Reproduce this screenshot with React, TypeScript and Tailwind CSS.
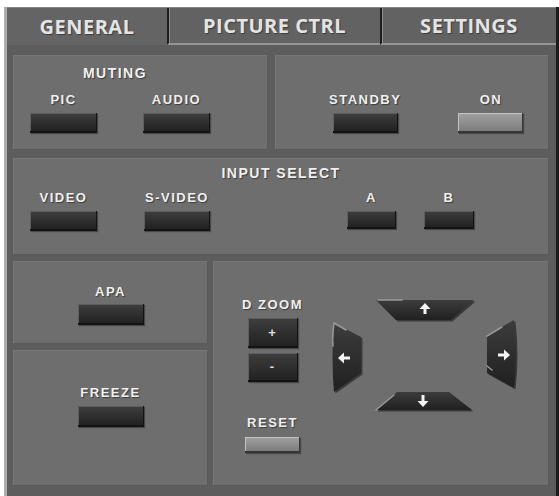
import React from 'react'

const lbl =
  "font-['Liberation_Sans',Arial,sans-serif] font-bold text-[#f0f0f0] leading-none tracking-[1.5px] [text-shadow:1px_1px_1px_rgba(0,0,0,0.45)] whitespace-nowrap"
const tabTxt =
  "font-['Open_Sans',sans-serif] font-bold text-[20px] leading-none tracking-[0.5px] text-[#e4e4e4] [text-shadow:1px_1px_1px_rgba(0,0,0,0.4)]"
const panel =
  'bg-[#6e6e6e] shadow-[inset_-1px_-1px_0_rgba(0,0,0,0.18),inset_1px_1px_0_rgba(255,255,255,0.06)]'
const dark =
  'bg-linear-to-b from-[#3e3e3e] to-[#222222] border-b-2 border-r border-[#131313] shadow-[inset_1px_1px_0_#5e5e5e,1px_1px_1px_rgba(0,0,0,0.35)]'
const light =
  'bg-linear-to-b from-[#a2a2a2] to-[#7c7c7c] border-b-2 border-r border-[#363636] shadow-[inset_1px_1px_0_#c4c4c4,1px_1px_1px_rgba(0,0,0,0.35)]'

function Item({ label, btn }: { label: string; btn: string }) {
  return (
    <div className="flex flex-col items-center">
      <span className={`${lbl} text-[13px]`}>{label}</span>
      <div className={`mt-[7px] ${btn}`} />
    </div>
  )
}

function DPad() {
  const up = '44,4 142,4 119,24 64,24'
  const down = '65,96 117,96 140,114 44,114'
  const left = 'M2 27 L29 41 L29 77 L2 96 Q-1 62 2 27 Z'
  const right = 'M155 39 L182 24 Q186 58 182 92 L155 77 Z'
  return (
    <svg width="186" height="116" viewBox="0 0 186 116">
      <defs>
        <linearGradient id="pad" x1="0" y1="0" x2="0" y2="1">
          <stop offset="0" stopColor="#3c3c3c" />
          <stop offset="1" stopColor="#202020" />
        </linearGradient>
      </defs>
      <g fill="#3b3b3b" transform="translate(1.5 1.5)">
        <polygon points={up} />
        <polygon points={down} />
        <path d={left} />
        <path d={right} />
      </g>
      <g fill="url(#pad)">
        <polygon points={up} />
        <polygon points={down} />
        <path d={left} />
        <path d={right} />
      </g>
      <g stroke="#9a9a9a" strokeWidth="1.5" fill="none" strokeLinecap="round">
        <path d="M46 4 L70 4" />
        <path d="M44 114 L62 99" />
        <path d="M2 27 L14 34" />
        <path d="M2 28 Q0 40 1 50" />
        <path d="M155 40 L170 31" />
        <path d="M155 70 L160 74" />
      </g>
      <g fill="#f4f4f4">
        <polygon points="93,7 87.5,13 98.5,13" />
        <rect x="91.5" y="12" width="3" height="6" />
        <polygon points="91,111 85.5,105 96.5,105" />
        <rect x="89.5" y="99" width="3" height="7" />
        <polygon points="6,62 12,56.5 12,67.5" />
        <rect x="11" y="60.5" width="7" height="3" />
        <polygon points="178,59 172,53.5 172,64.5" />
        <rect x="166" y="57.5" width="7" height="3" />
      </g>
    </svg>
  )
}

export default function App() {
  return (
    <div className="w-[559px] h-[496px] bg-white pl-[4px] pt-[7px] overflow-hidden">
      <div className="w-[555px] h-[489px] bg-[#5d5d5d] border-l-[3px] border-l-[#adadad] border-r-[3px] border-r-[#1c1c1c] flex flex-col">
        {/* tabs */}
        <div className="flex h-[38px] border-t border-[#858585]">
          <div className={`w-[160px] bg-[#646464] flex items-center justify-center ${tabTxt}`}>GENERAL</div>
          <div
            className={`w-[213px] bg-[#626262] border-l-2 border-l-[#1e1e1e] border-b-2 border-b-[#959595] shadow-[inset_1px_0_0_#8e8e8e] flex items-center justify-center ${tabTxt}`}
          >
            PICTURE CTRL
          </div>
          <div
            className={`flex-1 bg-[#626262] border-l-2 border-l-[#1e1e1e] border-b-2 border-b-[#959595] shadow-[inset_1px_0_0_#8e8e8e] flex items-center justify-center ${tabTxt}`}
          >
            SETTINGS
          </div>
        </div>

        <div className="flex flex-col pl-[6px] pr-[7px] pt-[10px]">
          {/* row 1 */}
          <div className="flex gap-[7px] h-[95px]">
            <div className={`${panel} w-[255px] pl-[17px] pt-[11px]`}>
              <div className="w-[180px] flex flex-col">
                <span className={`${lbl} text-[14px] text-center pr-[10px]`}>MUTING</span>
                <div className="flex gap-[46px] mt-[13px]">
                  <div className="w-[67px] flex justify-center">
                    <Item label="PIC" btn={`${dark} w-[67px] h-[20px]`} />
                  </div>
                  <div className="w-[67px] flex justify-center">
                    <Item label="AUDIO" btn={`${dark} w-[67px] h-[20px]`} />
                  </div>
                </div>
              </div>
            </div>
            <div className={`${panel} flex-1 flex pl-[54px] pt-[38px] gap-[57px]`}>
              <Item label="STANDBY" btn={`${dark} w-[65px] h-[20px]`} />
              <Item label="ON" btn={`${light} w-[65px] h-[20px]`} />
            </div>
          </div>

          {/* row 2 */}
          <div className={`${panel} mt-[8px] h-[97px] flex flex-col pt-[8px]`}>
            <span className={`${lbl} text-[14px] text-center`}>INPUT SELECT</span>
            <div className="flex mt-[11px] pl-[17px]">
              <Item label="VIDEO" btn={`${dark} w-[67px] h-[20px]`} />
              <div className="ml-[47px]">
                <Item label="S-VIDEO" btn={`${dark} w-[66px] h-[20px]`} />
              </div>
              <div className="ml-[137px]">
                <Item label="A" btn={`${dark} w-[49px] h-[18px]`} />
              </div>
              <div className="ml-[28px]">
                <Item label="B" btn={`${dark} w-[50px] h-[18px]`} />
              </div>
            </div>
          </div>

          {/* row 3 */}
          <div className="flex gap-[5px] mt-[6px] h-[225px]">
            <div className="w-[195px] flex flex-col gap-[6px]">
              <div className={`${panel} h-[83px] flex flex-col items-center pt-[24px]`}>
                <span className={`${lbl} text-[13px]`}>APA</span>
                <div className={`mt-[6px] ${dark} w-[66px] h-[21px]`} />
              </div>
              <div className={`${panel} flex-1 flex flex-col items-center pt-[36px]`}>
                <span className={`${lbl} text-[13px]`}>FREEZE</span>
                <div className={`mt-[7px] ${dark} w-[66px] h-[21px]`} />
              </div>
            </div>
            <div className={`${panel} flex-1 flex`}>
              <div className="w-[55px] ml-[32px] pt-[37px] flex flex-col items-center">
                <span className={`${lbl} text-[13px]`}>D ZOOM</span>
                <div className={`mt-[7px] ${dark} w-[50px] h-[30px] flex items-center justify-center text-[#e0e0e0] text-[13px] font-bold font-['Liberation_Sans',Arial,sans-serif] leading-none`}>
                  +
                </div>
                <div className={`mt-[5px] ${dark} w-[50px] h-[29px] flex items-center justify-center text-[#e0e0e0] text-[13px] font-bold font-['Liberation_Sans',Arial,sans-serif] leading-none`}>
                  -
                </div>
                <span className={`${lbl} text-[13px] mt-[34px]`}>RESET</span>
                <div className={`mt-[8px] ${light} w-[55px] h-[16px]`} />
              </div>
              <div className="ml-[32px] pt-[35px]">
                <DPad />
              </div>
            </div>
          </div>
        </div>
      </div>
    </div>
  )
}
